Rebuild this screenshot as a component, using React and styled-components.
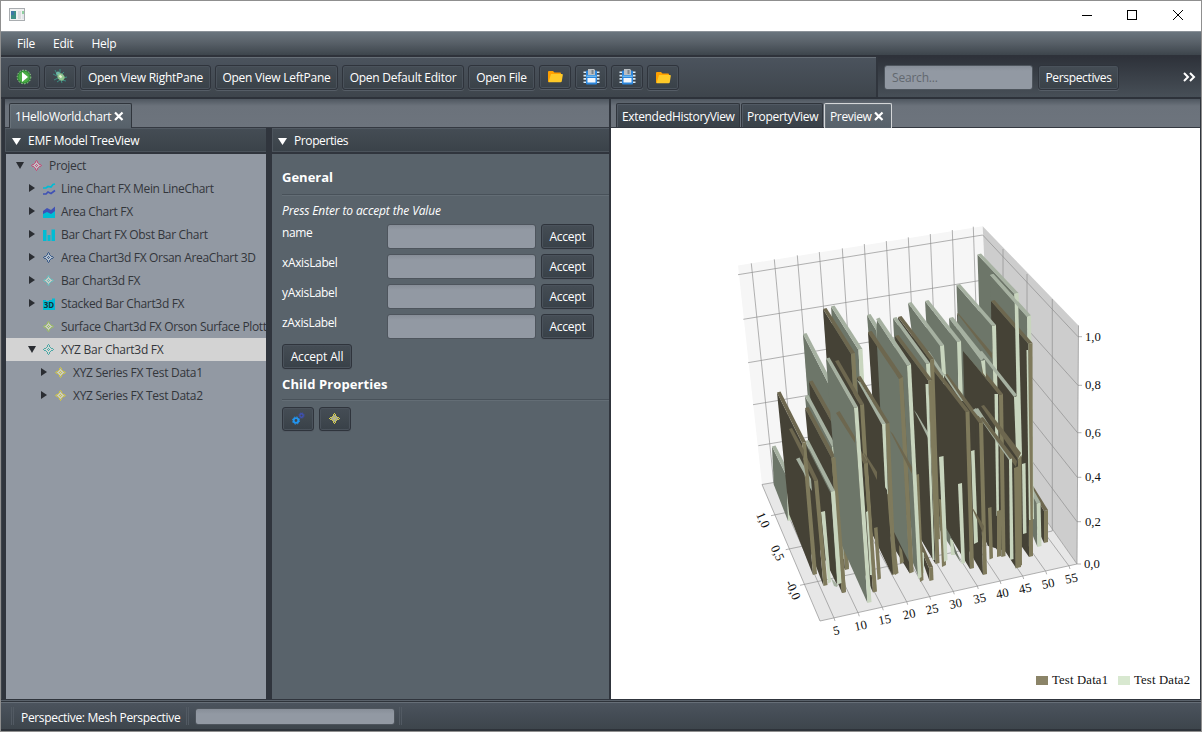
import React from "react";
import styled, { createGlobalStyle } from "styled-components";

const Global = createGlobalStyle`
  * { box-sizing: border-box; }
  body { margin: 0; background: #fff; }
`;

const Window = styled.div`
  width: 1202px;
  height: 732px;
  display: flex;
  flex-direction: column;
  border: 1px solid #8f8f8f;
  background: #30353d;
  color: #fff;
  font: 12px/16px "Open Sans", "Noto Sans", sans-serif;
  letter-spacing: -0.2px;
  overflow: hidden;
  white-space: nowrap;
`;

const Label = styled.span`
  letter-spacing: ${(p) => p.$ls ?? -0.24}px;
`;

const TitleBar = styled.div`
  height: 30px;
  flex: none;
  background: #fff;
  display: flex;
  align-items: center;
  justify-content: space-between;
  padding: 0 16px 2px 8px;
`;

const WindowButtons = styled.div`
  display: flex;
  gap: 34px;
`;

const MenuBar = styled.div`
  height: 26px;
  flex: none;
  display: flex;
  gap: 18px;
  padding: 4px 16px 0;
  border-top: 1px solid #8b9299;
  border-bottom: 2px solid #2e323a;
  background: linear-gradient(#6a757e, #596169 45%, #3d454c);
`;

const ToolRow = styled.div`
  height: 42px;
  flex: none;
  display: flex;
  border-bottom: 2px solid #2d323a;
`;

const MainTools = styled.div`
  width: 875px;
  display: flex;
  gap: 4px;
  padding: 7px 7px 0;
  border-top: 1px solid #666e76;
  background: linear-gradient(#4b535d, #3e454c);
`;

const SideTools = styled.div`
  flex: 1;
  margin-left: 2px;
  display: flex;
  align-items: flex-start;
  gap: 5px;
  padding: 8px 5px 0 6px;
  background: linear-gradient(#2e323a, #474f57);
`;

const Button = styled.div`
  width: ${(p) => p.$w}px;
  height: ${(p) => p.$h ?? 25}px;
  flex: none;
  display: flex;
  align-items: center;
  justify-content: center;
  border: 1px solid #2f343c;
  border-radius: 3px;
  background: linear-gradient(#454d55, #394148);
  box-shadow: inset 0 0 0 1px #4a525b, 0 1px 0 #555d66;
`;

const Field = styled.div`
  width: ${(p) => p.$w}px;
  height: ${(p) => p.$h ?? 25}px;
  flex: none;
  padding: 4px 7px;
  border: 1px solid #4e555d;
  border-radius: 3px;
  background: linear-gradient(#878e98, #9299a3 5px);
  color: #62686f;
`;

const Overflow = styled.div`
  margin-left: auto;
  padding-top: 6px;
  display: flex;
`;

const Workbench = styled.div`
  height: 600px;
  flex: none;
  display: flex;
  padding: 0 1px 0 3px;
  border-left: 1px solid #3c4249;
`;

const Pane = styled.section`
  width: ${(p) => p.$w}px;
  flex: none;
  display: flex;
  flex-direction: column;
  margin-right: ${(p) => p.$gap ?? 0}px;
`;

const TabStrip = styled.div`
  height: 29px;
  flex: none;
  display: flex;
  align-items: flex-end;
  padding-left: ${(p) => p.$pad}px;
  border-bottom: 1px solid #343941;
  background: linear-gradient(#4f5760, #6b727b 7px, #6d747d);
`;

const Tab = styled.div`
  width: ${(p) => p.$w}px;
  height: ${(p) => (p.$active ? 25 : 24)}px;
  margin-bottom: ${(p) => (p.$active ? -1 : 0)}px;
  margin-right: 1px;
  padding: 5px 5px 0;
  display: flex;
  justify-content: space-between;
  border: 1px solid ${(p) => (p.$focus ? "#d4d6d8" : "#30353c")};
  border-bottom: 0;
  border-radius: 2px 2px 0 0;
  background: ${(p) => (p.$active ? "linear-gradient(#626b74, #57616a)" : "linear-gradient(#464e57, #394148)")};
  box-shadow: inset 1px 1px 0 ${(p) => (p.$active ? "#69727a" : "#515963")};
`;

const CloseMark = styled.svg`
  margin: 2px 2px 0 0;
  flex: none;
`;

const Split = styled.div`
  flex: 1;
  display: flex;
`;

const Column = styled.div`
  width: ${(p) => p.$w}px;
  margin-right: ${(p) => p.$gap ?? 0}px;
  display: flex;
  flex-direction: column;
`;

const PaneHeader = styled.div`
  height: 26px;
  flex: none;
  display: flex;
  align-items: center;
  gap: 7px;
  padding: 2px 7px 0 ${(p) => p.$pad ?? 7}px;
  border-bottom: 2px solid #30353d;
  background: linear-gradient(#454d55, #3a4249);
  box-shadow: inset 0 1px 0 #525a63, inset 0 -1px 0 #4b535b, inset 1px 0 0 #4d555d;
`;

const Tree = styled.div`
  flex: 1;
  margin-left: 1px;
  background: #9299a3;
  color: #33363b;
  overflow: hidden;
`;

const TreeRow = styled.div`
  height: 23px;
  display: flex;
  align-items: center;
  padding-left: ${(p) => 9 + p.$level * 12}px;
  background: ${(p) => (p.$selected ? "#d3d3d3" : "transparent")};
`;

const Disclosure = styled.svg`
  width: 10px;
  height: 10px;
  margin: 0 5px 2px 0;
  flex: none;
`;

const TreeIcon = styled.svg`
  width: 14px;
  height: 14px;
  margin: 1px 5px 0 0;
  flex: none;
`;

const Form = styled.div`
  flex: 1;
  padding: 14px 0 0 10px;
  background: #59636b;
`;

const Heading = styled.div`
  height: ${(p) => p.$h}px;
  font-size: 13px;
  font-weight: 700;
  line-height: 18px;
  letter-spacing: ${(p) => p.$ls ?? 0.1}px;
  border-bottom: 1px solid #485159;
  box-shadow: 0 1px 0 #636d75;
`;

const Hint = styled.div`
  margin: 8px 0 5px;
  font-style: italic;
  letter-spacing: -0.12px;
`;

const FormRow = styled.div`
  height: 30px;
  display: flex;
  align-items: flex-start;
`;

const FormLabel = styled.div`
  width: 105px;
  margin-top: 1px;
`;

const ButtonLine = styled.div`
  display: flex;
  gap: 5px;
  margin: ${(p) => p.$m};
`;

const Spacer = styled.div`
  width: ${(p) => p.$w ?? 5}px;
`;

const ChartArea = styled.div`
  height: 571px;
  background: #fff;
  overflow: hidden;
`;

const StatusBar = styled.div`
  flex: 1;
  margin-top: 1px;
  border-top: 1px solid #59616a;
  border-bottom: 1px solid #2e333a;
  background: #2e333a;
  padding-top: 1px;
`;

const StatusInner = styled.div`
  height: 27px;
  display: flex;
  align-items: center;
  border-top: 1px solid #666e77;
  background: linear-gradient(#4b535d, #3d454c);
  padding-left: 10px;
`;

const Grip = styled.div`
  width: 3px;
  height: 18px;
  border: solid #525a63;
  border-width: 0 1px;
`;

const StatusText = styled.div`
  width: 172px;
  padding: 3px 0 0 7px;
  letter-spacing: -0.33px;
`;

/* ---------- icons ---------- */

const AppIcon = () => (
  <svg width="16" height="14" viewBox="0 0 16 14">
    <rect x=".5" y=".5" width="15" height="12" fill="#f2f2f2" stroke="#a9adb0" />
    <rect x="2" y="3" width="5" height="8" fill="#3f8f86" />
    <rect x="2" y="3" width="3" height="4" fill="#3f78a6" />
    <rect x="9" y="3" width="3" height="8" fill="#dcdde0" />
    <rect x="13" y="3" width="2" height="3" fill="#8fd0a0" />
    <rect x="13" y="6" width="2" height="5" fill="#e3e6ea" />
  </svg>
);

const Close = () => (
  <CloseMark width="10" height="10" viewBox="0 0 10 10">
    <path d="M1 1.500L8.500 9M8.500 1.500L1 9" stroke="#fff" strokeWidth="2.200" />
  </CloseMark>
);

const RunIcon = () => (
  <svg width="16" height="16" viewBox="0 0 16 16">
    <circle cx="8" cy="8" r="6.800" fill="#2f8a35" stroke="#9fd09a" strokeDasharray="1.500 1.500" />
    <circle cx="8" cy="8" r="5.500" fill="#4bab45" />
    <path d="M6 3L12 8L6 13Z" fill="#fff" />
  </svg>
);

const BugIcon = () => (
  <svg width="16" height="16" viewBox="0 0 16 16">
    <path d="M3 1l2 4M8 0v4M1 5l4 2M2 11l4-2M12 3l-3 3M15 8l-4 1M14 12l-4-1M5 13l3-2M10 14l-1-3" stroke="#3b8f83" strokeWidth="1" />
    <circle cx="6" cy="4.500" r="2" fill="#6db7a5" />
    <ellipse cx="9" cy="8" rx="3.200" ry="3.800" transform="rotate(-45 9 8)" fill="#8fc58e" />
    <path d="M7.500 6.500l2 2" stroke="#eef3d8" strokeWidth="2" />
  </svg>
);

const FolderIcon = () => (
  <svg width="16" height="14" viewBox="0 0 16 14">
    <path d="M1 2q0-1 1-1h4l1.500 1.500H13q1 0 1 1V12H1.500Q1 12 1 11Z" fill="#ffa000" />
    <path d="M4 4H15q1 0 .8 1l-1 6.200q-.2 1-1.200 1H1.500z" fill="#ffca28" />
  </svg>
);

const SaveIcon = () => (
  <svg width="17" height="16" viewBox="0 0 17 16">
    <path d="M1.800 2.500v13M15.200 2.500v13" stroke="#d9ecf8" strokeWidth="2.600" strokeDasharray="1.600 1.700" />
    <rect x="3" y="1.500" width="11" height="14" rx="1" fill="#2b86dc" />
    <path d="M5 0h6l1 1v5H5z" fill="#b9bec2" />
    <rect x="8.500" y="1" width="2" height="4" fill="#7b848b" />
    <rect x="4.500" y="9" width="8" height="4.500" fill="#f3f7fb" />
    <path d="M3.500 7.200h10" stroke="#8ed0f5" />
  </svg>
);

const DIAMOND_DOTS = [
  [6, 1], [5, 2], [7, 2], [5, 3], [7, 3], [4, 4], [8, 4],
  [3, 5], [9, 5], [2, 5], [10, 5], [1, 6], [11, 6], [2, 7], [3, 7], [9, 7], [10, 7],
  [4, 8], [8, 8], [5, 9], [7, 9], [5, 10], [7, 10], [6, 11], [6, 5], [5, 6], [7, 6], [6, 7],
];

const DiamondShape = ({ c, f = "#f4f3e0" }) => (
  <g>
    <path d="M6.500 2.500L10.500 6.500L6.500 10.500L2.500 6.500Z" fill={f} opacity=".55" />
    {DIAMOND_DOTS.map(([x, y]) => (
      <rect key={`${x}-${y}`} x={x} y={y} width="1" height="1" fill={c} />
    ))}
  </g>
);

const iconArt = {
  line: (
    <g fill="none" strokeWidth="1.700">
      <path d="M1 6L4 6L6 4.500L9 5L11 2.500L13 2" stroke="#00bcd4" />
      <path d="M1 12H4L6 10L9 11.500L13 8.500" stroke="#3f51b5" />
    </g>
  ),
  area: (
    <g>
      <path d="M1 6L5 3L9 5L13 1.500V13H1Z" fill="#3f51b5" />
      <path d="M1 9L5 7L9 9L13 6V13H1Z" fill="#00bcd4" />
    </g>
  ),
  bar: <path d="M1 2H4.500V13H1ZM5.500 7H8.500V13H5.500ZM9.500 1.500H13V13H9.500Z" fill="#00bcd4" />,
  stacked: (
    <g>
      <path d="M1 3H4V4H7V3H10V1.500H13V13H1Z" fill="#00bcd4" />
      <text x="7" y="10.500" textAnchor="middle" fontSize="8" fontWeight="700" letterSpacing="0" fill="#12333a">3D</text>
    </g>
  ),
};

const treeItems = [
  { level: 0, open: true, color: "#c4527c", fill: "#e9dfe0", text: "Project" },
  { level: 1, art: "line", text: "Line Chart FX Mein LineChart" },
  { level: 1, art: "area", text: "Area Chart FX" },
  { level: 1, art: "bar", text: "Bar Chart FX Obst Bar Chart" },
  { level: 1, color: "#3f5f8c", fill: "#cfe0ee", text: "Area Chart3d FX Orsan AreaChart 3D" },
  { level: 1, color: "#68bcbc", text: "Bar Chart3d FX" },
  { level: 1, art: "stacked", text: "Stacked Bar Chart3d FX" },
  { level: 1, leaf: true, color: "#9cbf62", text: "Surface Chart3d FX Orson Surface Plotter" },
  { level: 1, open: true, selected: true, color: "#4fa8a6", fill: "#d5ded8", text: "XYZ Bar Chart3d FX" },
  { level: 2, color: "#c9c14a", text: "XYZ Series FX Test Data1" },
  { level: 2, color: "#c9c14a", text: "XYZ Series FX Test Data2" },
];

const Triangle = ({ open, leaf, color = "#2a2d32" }) => (
  <Disclosure viewBox="0 0 10 10">
    {!leaf && <path d={open ? "M1 2H9L5 9Z" : "M2 1L8 5L2 9Z"} fill={color} />}
  </Disclosure>
);

/* ---------- 3D chart ---------- */

const PALETTE = {
  T: { side: "#454236", top: "#6d674f", front: "#7f7a5c" },
  G: { side: "#6d7669", top: "#a6b1a1", front: "#c8d5be" },
};

const pts = (...v) => v.map((p) => p.join(",")).join(" ");

const Slab = ({ d }) => {
  const [k, bx, by, fx, fy, gx, gy] = d;
  const c = PALETTE[k];
  const kx = gx + (bx - fx) * 0.95;
  const ky = gy + (by - fy) * 1.2;
  return (
    <g>
      <polygon points={pts([bx, by], [fx, fy], [gx, gy], [kx, ky])} fill={c.side} />
      <polygon points={pts([bx, by], [bx + 3.5, by - 1], [fx + 4, fy - 1], [fx, fy])} fill={c.top} />
      <polygon points={pts([fx, fy], [fx + 4, fy - 1], [gx + 4, gy - 1], [gx, gy])} fill={c.front} />
    </g>
  );
};

const Face = ({ d }) => {
  const [k, part, ...n] = d;
  const p = [];
  for (let i = 0; i < n.length; i += 2) p.push([n[i], n[i + 1]]);
  return <polygon points={pts(...p)} fill={PALETTE[k][part]} />;
};

/* Slabs carry a kind and three corners (back top, front top, front bottom);
   faces carry a kind, the shaded part and a free polygon. Painted far to near. */
const solids = [
  ["T", 1029, 486, 1044, 511, 1044, 543],
  ["G", 1024, 480, 1036.5, 503.5, 1037.5, 547],
  ["G", 977.5, 254.5, 1014.5, 294, 1019, 500],
  ["G", 990, 275, 1027, 316.5, 1030, 520],
  ["T", 991, 301, 1028.5, 344, 1029, 557],
  ["T", "side", 966, 440, 1015, 420, 1028, 480, 1028, 540, 1014, 555, 1002, 550, 988, 546, 976, 520],
  ["G", "front", 1014.5, 294, 1018, 293, 1022, 455, 1018, 465],
  ["G", "top", 990, 275, 993, 274, 1030, 315, 1027, 317],
  ["G", "front", 1026.5, 350, 1028, 350, 1030.5, 520, 1029, 520],
  ["G", "front", 1022, 464, 1025.5, 463, 1026.5, 533, 1023, 534],
  ["T", 957, 314, 992, 354, 997, 530],
  ["G", 956.5, 285, 992, 326, 996, 500],
  ["T", "top", 957, 313, 959, 314, 992, 353, 992, 359],
  ["T", "side", 985, 380, 1014, 398, 1016, 568, 985, 520],
  ["G", "top", 979, 352, 982, 351, 1017, 395, 1014, 397],
  ["G", "front", 1014, 397, 1018, 396, 1019, 456, 1016, 452],
  ["T", 963, 350, 999, 395, 1001.5, 557],
  ["G", "front", 994.5, 394, 998, 394, 999, 515, 996.5, 516],
  ["G", "top", 949, 318, 953, 317, 985, 357, 981, 361],
  ["G", "side", 949, 318, 981, 361, 982, 373, 963, 351, 962, 378, 951, 365],
  ["G", "front", 981, 361, 985, 360, 986, 377, 983, 373],
  ["T", "front", 997, 511, 1001, 510, 1001, 556, 997, 557],
  ["T", "top", 981, 406, 984, 405, 1021, 453, 1018, 459],
  ["T", "front", 1018, 459, 1021.5, 455, 1022, 565, 1018, 567],
  ["T", "front", 1014, 468, 1019, 466, 1021, 567, 1015.5, 568.5],
  ["G", "top", 974, 410, 978, 408, 1011, 458, 1009, 460],
  ["T", "top", 980, 418, 983, 417, 1017, 461, 1016, 467],
  ["G", "front", 1009, 459.5, 1012, 458.5, 1013.5, 559, 1010, 560],
  ["T", "front", 988, 508, 991.5, 507, 993, 558, 989.5, 559.5],
  ["G", 925, 301, 957, 342, 959.5, 420],
  ["G", 908, 303, 940, 346, 943, 390],
  ["T", 944, 375, 979, 423, 983, 575],
  ["T", "side", 950, 400, 975, 420, 981, 570, 966, 540],
  ["G", "front", 971, 451, 974.5, 450, 978, 542, 974, 544],
  ["T", "top", 971, 506, 974, 510, 984, 526, 983, 533],
  ["G", "top", 973, 410, 976, 408, 981, 416, 978, 416],
  ["G", "top", 943, 374, 945, 374, 963, 401, 961, 401],
  ["G", "side", 926, 350, 943, 374, 943, 384, 930, 366],
  ["G", "top", 926, 352, 929, 351, 944, 374, 942, 376],
  ["T", 930, 366, 965.5, 412, 970, 569],
  ["G", "front", 958, 484, 962, 483, 965, 563, 961.5, 564],
  ["G", "side", 937, 512, 950, 535, 961, 563, 940, 530],
  ["G", "front", 950, 538, 953, 541, 955, 555, 951, 555],
  ["T", "front", 939, 499, 943, 500, 946, 565, 942, 567],
  ["G", "front", 939, 457, 943.5, 456, 947.5, 560, 944, 562],
  ["T", 898, 317, 930, 360, 936, 540],
  ["G", 893, 318, 926, 364, 935, 558],
  ["T", 895, 336, 928.5, 381, 935.5, 564],
  ["T", "side", 909, 375, 928, 398, 935, 562, 922, 540, 915, 460],
  ["G", "top", 914, 410, 917, 414, 929, 434, 928, 438],
  ["G", "front", 925.5, 384, 928.5, 384, 934.5, 560, 932.5, 560],
  ["T", 918, 543, 929, 568, 929.5, 581],
  ["G", "front", 920, 551, 924, 553, 924, 573, 921, 573],
  ["T", "front", 915, 475, 919, 474, 923.5, 580, 920, 582],
  ["G", 867, 315, 876, 330, 889, 500],
  ["T", 868, 332, 899, 379, 909.5, 573],
  ["G", "side", 876, 340, 877, 320, 907, 366, 919, 578, 913, 563, 903, 380],
  ["G", "side", 877, 345, 900, 380, 909, 564, 886, 522],
  ["G", "top", 876, 319, 879.5, 317.5, 911, 364, 907, 366],
  ["G", "front", 907, 366, 911, 364, 921.5, 577, 918, 579],
  ["T", "top", 868, 333, 871.5, 331, 903, 377, 899, 379],
  ["T", "front", 899, 379, 903, 377, 913.5, 571.5, 909.5, 573.5],
  ["T", "side", 894, 532, 909, 562, 909.5, 573, 894, 548],
  ["T", "top", 890, 431, 893, 434, 912, 467, 912, 474],
  ["T", "front", 899, 545, 902, 550, 904, 562, 900, 564],
  ["G", 831, 306.5, 858.5, 350, 866, 500],
  ["T", 823, 309, 851, 354, 861, 520],
  ["T", 857, 377, 885.5, 424, 892, 575],
  ["T", "front", 886, 495, 889, 490, 898.5, 573, 895, 575],
  ["G", "top", 857, 380, 860, 382, 886, 424, 882, 425],
  ["G", "front", 882, 424, 885.5, 424, 888, 494, 885.5, 495],
  ["T", 835, 361, 860, 405, 868, 540],
  ["T", 845, 430, 864, 464, 873, 592.5],
  ["T", "side", 868, 464, 887, 490, 893, 575, 873, 535],
  ["T", "front", 874, 528, 877.5, 527, 881, 578.5, 877.5, 580],
  ["G", "front", 866, 512, 868, 511, 872, 575, 870, 575],
  ["G", 803, 334, 831, 389, 838, 510],
  ["T", 809, 381.5, 836, 430, 845, 570],
  ["T", "front", 844, 550, 847, 555, 849, 567, 846, 568],
  ["G", 805, 396, 832, 447, 840, 560],
  ["T", 805, 408, 831.5, 458, 842, 593],
  ["G", 826, 358.5, 854, 408, 867.5, 603],
  ["T", "front", 831.5, 458, 835.5, 457, 846, 592, 842, 593],
  ["T", "top", 836, 413, 839.5, 411, 855, 437, 855, 443],
  ["T", "top", 863, 452, 866, 455, 877, 472, 877, 480],
  ["G", 805, 441, 831, 492, 837.5, 584],
  ["T", "side", 805, 443, 831, 494, 837, 585, 812, 532],
  ["G", "front", 831, 492, 834, 491, 841, 583, 837.5, 584],
  ["G", "top", 831, 578, 838, 585, 837, 587, 834, 586],
  ["G", "front", 821, 512, 825, 511, 831, 582, 828, 583.5],
  ["G", 772, 446.5, 787, 477, 788, 521],
  ["T", 789, 429, 814, 481, 823.5, 586],
  ["G", "top", 796, 459, 799.5, 457.5, 811, 479, 812, 491, 809, 486],
  ["T", 777, 392.5, 802, 443, 813, 575],
  ["T", "top", 789, 429, 792, 428, 804, 450, 804, 459],
  ["G", "top", 796, 459, 799.5, 457.5, 804, 466, 806, 477],
];

const tops = [[751.3, 263.3], [774.3, 259.3], [797.3, 255.3], [819.3, 252], [842.3, 248.3], [864.3, 244], [886.3, 241], [908.3, 237.3], [930.3, 234], [952.3, 230], [973.3, 226.7]];
const fronts = [[834, 618], [858.3, 613.3], [882.3, 607.3], [906.7, 601.7], [929.7, 596.7], [953.3, 591.3], [977.3, 586], [1000, 581], [1022.7, 576], [1045.7, 571.3], [1069, 566]];
const levels = [
  [738, 274.7, 982.7, 235, 1078, 336.7, "1,0"],
  [743.3, 319.3, 983, 280, 1078, 385.3, "0,8"],
  [748, 362.7, 986, 322, 1077.5, 432.7, "0,6"],
  [753, 404.7, 988, 365, 1077.3, 477.3, "0,4"],
  [758.3, 445.7, 991, 406, 1077, 521.7, "0,2"],
];
const depthLines = [[775, 514.7, 1003, 467, "1,0", 763, 520], [789.7, 548.7, 1027, 499, "0,5", 777.5, 553], [804, 584.3, 1052.3, 531, "-0,0", 793, 590]];

const Chart = () => (
  <svg width="589" height="571" viewBox="611 128 589 571" fontFamily='"Liberation Serif", serif' fontSize="12.700" letterSpacing="0" fill="#111">
    <polygon points="738,265.500 982.700,226.300 993,445 762,484.500" fill="#f6f6f6" />
    <polygon points="982.700,226.300 1078.500,325.500 1077,564 993,445" fill="#cdcdcd" />
    <polygon points="762,484.500 993,445 1077,564 820,621" fill="#e7e7e7" />
    <g fill="none" stroke="#8d8d8d" strokeOpacity=".68" strokeWidth="1">
      {tops.map(([x, y], i) => (
        <polyline key={i} points={pts([x, y], [773.7 + 20.7 * i, 482.5 - 3.55 * i], fronts[i], [fronts[i][0] + 1, fronts[i][1] + 3])} />
      ))}
      {levels.map((l, i) => (
        <polyline key={i} points={pts([l[0], l[1]], [l[2], l[3]], [l[4], l[5]], [l[4] + 4, l[5]])} />
      ))}
      {depthLines.map((l, i) => (
        <path key={i} d={`M${l[0] - 4} ${l[1] + 1}L${l[2]} ${l[3]}V${249 + i * 25}`} />
      ))}
      <path d="M762 484.500L820 621L1077 564L1078.500 325.500M762 484.500L993 445L1077 564H1081" />
    </g>
    {solids.map((d, i) => (typeof d[1] === "string" ? <Face key={i} d={d} /> : <Slab key={i} d={d} />))}
    {levels.map((l, i) => (
      <text key={i} x="1085" y={l[5] + 4}>{l[6]}</text>
    ))}
    <text x="1084" y="568">0,0</text>
    {fronts.map(([x, y], i) => (
      <text key={i} transform={`translate(${x + 3.2} ${y + 16.5}) rotate(-12)`} textAnchor="middle">{5 * (i + 1)}</text>
    ))}
    {depthLines.map((l, i) => (
      <text key={i} transform={`translate(${l[5]} ${l[6]}) rotate(66)`} textAnchor="middle" y="4">{l[4]}</text>
    ))}
    <rect x="1036" y="676" width="12" height="9" fill="#8b8468" />
    <text x="1052" y="684" textLength="56">Test Data1</text>
    <rect x="1118" y="676" width="12" height="9" fill="#d8e8d0" />
    <text x="1134" y="684" textLength="56">Test Data2</text>
  </svg>
);

/* ---------- page ---------- */

export default function App() {
  return (
    <Window>
      <Global />
      <TitleBar>
        <AppIcon />
        <WindowButtons>
          <svg width="12" height="12"><path d="M1 6.500H11" stroke="#000" /></svg>
          <svg width="12" height="12"><rect x=".5" y="1.500" width="9" height="9" fill="none" stroke="#000" /></svg>
          <svg width="12" height="12"><path d="M0 1L10 11M10 1L0 11" stroke="#000" /></svg>
        </WindowButtons>
      </TitleBar>
      <MenuBar>
        <Label>File</Label>
        <Label>Edit</Label>
        <Label>Help</Label>
      </MenuBar>
      <ToolRow>
        <MainTools>
          <Button $w={32} $h={24}><RunIcon /></Button>
          <Button $w={32} $h={24}><BugIcon /></Button>
          <Button $w={131}><Label>Open View RightPane</Label></Button>
          <Button $w={123}><Label>Open View LeftPane</Label></Button>
          <Button $w={122}><Label>Open Default Editor</Label></Button>
          <Button $w={67}><Label>Open File</Label></Button>
          <Button $w={32} $h={24}><FolderIcon /></Button>
          <Button $w={32} $h={24}><SaveIcon /></Button>
          <Button $w={32} $h={24}><SaveIcon /></Button>
          <Button $w={32}><FolderIcon /></Button>
        </MainTools>
        <SideTools>
          <Field $w={149}>Search...</Field>
          <Button $w={81}><Label $ls={-0.34}>Perspectives</Label></Button>
          <Overflow>
            <svg width="14" height="12"><path d="M2 2L6 6L2 10M8 2L12 6L8 10" fill="none" stroke="#fff" strokeWidth="2" /></svg>
          </Overflow>
        </SideTools>
      </ToolRow>
      <Workbench>
        <Pane $w={604} $gap={2}>
          <TabStrip $pad={4}>
            <Tab $w={123} $active><Label $ls={-0.3}>1HelloWorld.chart</Label><Close /></Tab>
          </TabStrip>
          <Split>
            <Column $w={261} $gap={6}>
              <PaneHeader>
                <svg width="9" height="8"><path d="M0 1H9L4.500 8Z" fill="#fff" /></svg>
                <Label $ls={-0.27}>EMF Model TreeView</Label>
              </PaneHeader>
              <Tree>
                {treeItems.map((t) => (
                  <TreeRow key={t.text} $level={t.level} $selected={t.selected}>
                    <Triangle open={t.open} leaf={t.leaf} />
                    <TreeIcon viewBox="0 0 14 14">
                      {t.art ? iconArt[t.art] : <DiamondShape c={t.color} f={t.fill} />}
                    </TreeIcon>
                    <Label $ls={t.text.startsWith("XYZ") ? -0.27 : -0.33}>{t.text}</Label>
                  </TreeRow>
                ))}
              </Tree>
            </Column>
            <Column $w={337}>
              <PaneHeader $pad={6}>
                <svg width="9" height="8"><path d="M0 1H9L4.500 8Z" fill="#fff" /></svg>
                <Label $ls={-0.4}>Properties</Label>
              </PaneHeader>
              <Form>
                <Heading $h={27} $ls={0}>General</Heading>
                <Hint>Press Enter to accept the Value</Hint>
                {["name", "xAxisLabel", "yAxisLabel", "zAxisLabel"].map((n) => (
                  <FormRow key={n}>
                    <FormLabel><Label $ls={-0.35}>{n}</Label></FormLabel>
                    <Field $w={149} />
                    <Spacer />
                    <Button $w={53}><Label>Accept</Label></Button>
                  </FormRow>
                ))}
                <ButtonLine $m="0 0 6px"><Button $w={70}><Label $ls={-0.15}>Accept All</Label></Button></ButtonLine>
                <Heading $h={25}>Child Properties</Heading>
                <ButtonLine $m="7px 0 0">
                  <Button $w={32} $h={24}>
                    <svg width="14" height="14" viewBox="0 0 14 14" fill="none">
                      <circle cx="5" cy="8.500" r="2.300" stroke="#2196f3" strokeWidth="1.800" />
                      <circle cx="5" cy="8.500" r="3.600" stroke="#2196f3" strokeWidth="1" strokeDasharray="1.500 1.330" />
                      <circle cx="10.500" cy="3.500" r="1.700" stroke="#3f51b5" strokeWidth="1.400" />
                      <circle cx="10.500" cy="3.500" r="2.700" stroke="#3f51b5" strokeWidth=".8" strokeDasharray="1.100 1.020" />
                    </svg>
                  </Button>
                  <Button $w={32} $h={24}>
                    <svg width="14" height="14" viewBox="0 0 14 14"><DiamondShape c="#d3cb4a" /></svg>
                  </Button>
                </ButtonLine>
              </Form>
            </Column>
          </Split>
        </Pane>
        <Pane $w={589}>
          <TabStrip $pad={5}>
            <Tab $w={124}><Label $ls={-0.34}>ExtendedHistoryView</Label></Tab>
            <Tab $w={82}><Label $ls={-0.3}>PropertyView</Label></Tab>
            <Tab $w={68} $active $focus><Label $ls={-0.35}>Preview</Label><Close /></Tab>
          </TabStrip>
          <ChartArea><Chart /></ChartArea>
        </Pane>
      </Workbench>
      <StatusBar>
        <StatusInner>
          <Grip />
          <StatusText>Perspective: Mesh Perspective</StatusText>
          <Grip />
          <Spacer $w={6} />
          <Field $w={200} $h={17} />
          <Spacer $w={4} />
          <Grip />
        </StatusInner>
      </StatusBar>
    </Window>
  );
}
